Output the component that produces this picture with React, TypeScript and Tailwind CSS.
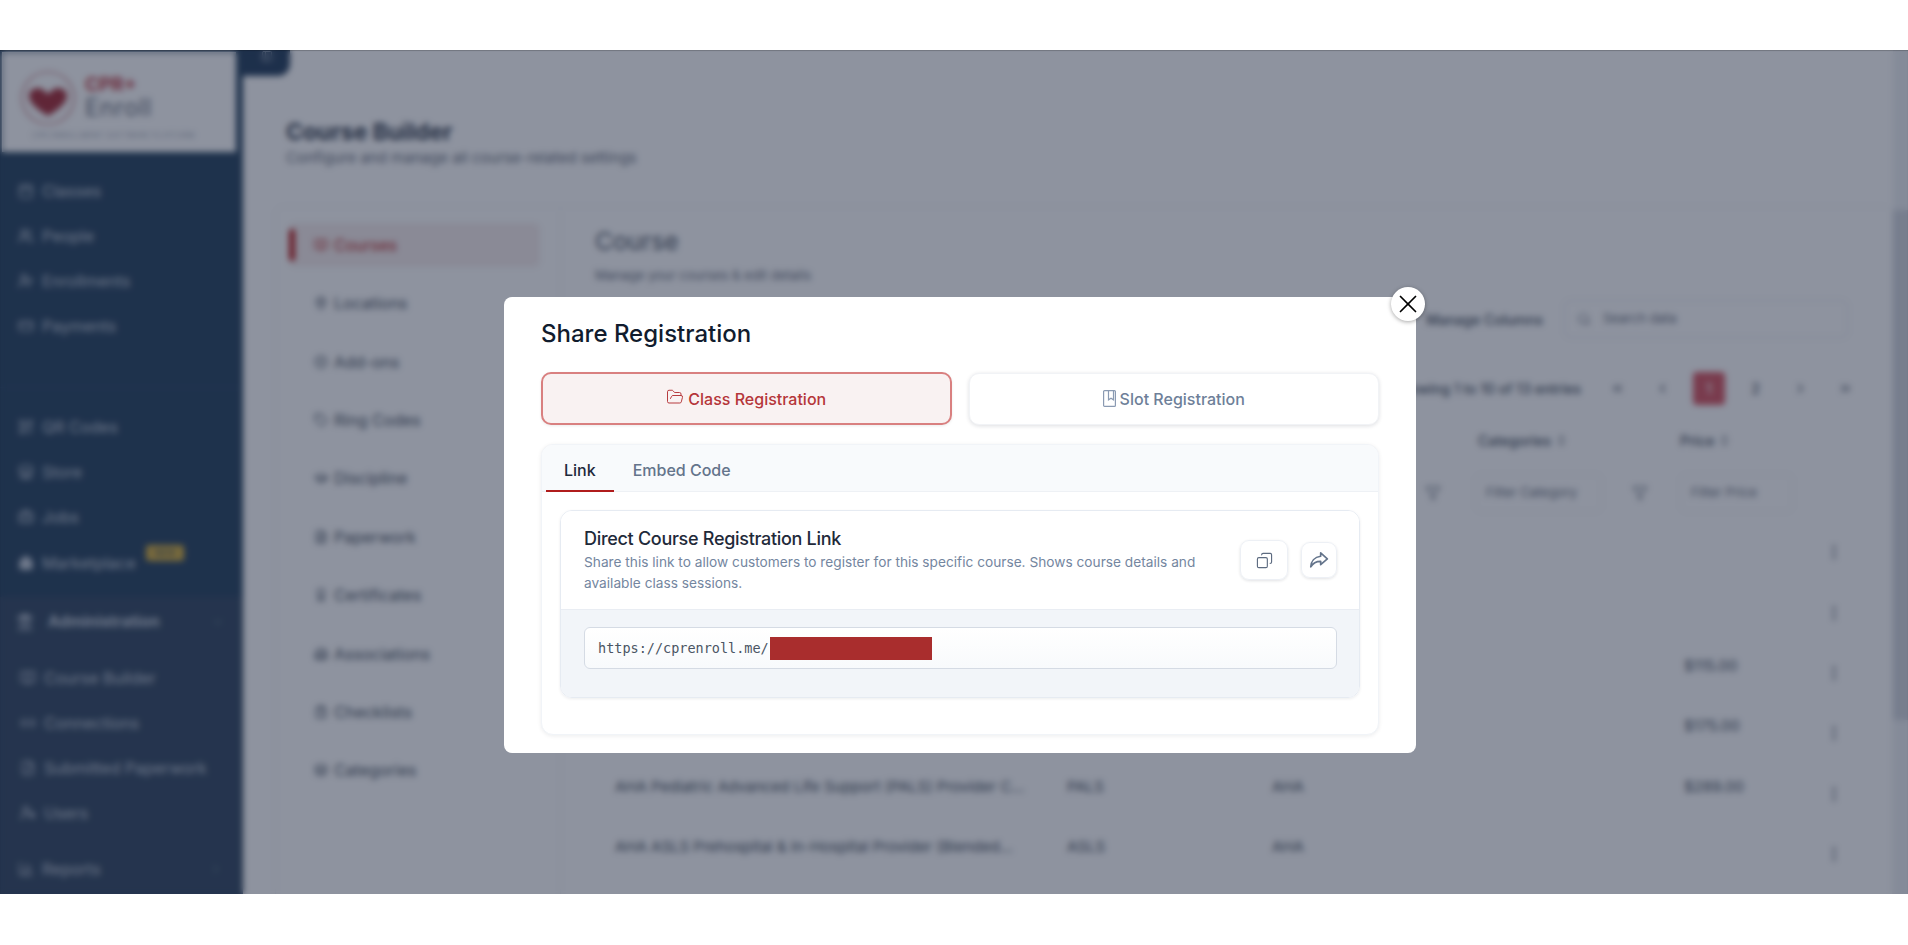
import { ChevronDown, ChevronLeft, ChevronRight, ChevronsLeft, ChevronsRight, ChevronsUpDown, Copy, EllipsisVertical, Filter, FolderOpen, Search, X, Calendar, Users, UserPlus, CreditCard, QrCode, Store, Briefcase, House, Landmark, BookOpen, Link2, FileCheck, UserCog, MapPin, PlusCircle, Tag, GraduationCap, FileText, Award, Building2, ClipboardList, Layers, BarChart3, PanelLeft } from "lucide-react";

const inter = { fontFamily: "Inter, sans-serif" };

const top = [
  { label: "Classes", icon: Calendar, cls: "h-[44px]" },
  { label: "People", icon: Users, cls: "h-[45px]" },
  { label: "Enrollments", icon: UserPlus, cls: "h-[45px]" },
  { label: "Payments", icon: CreditCard, cls: "h-[45px]" },
];
const mid = [
  { label: "QR Codes", icon: QrCode },
  { label: "Store", icon: Store },
  { label: "Jobs", icon: Briefcase },
];
const admin = [
  { label: "Course Builder", icon: BookOpen },
  { label: "Connections", icon: Link2 },
  { label: "Submitted Paperwork", icon: FileCheck },
  { label: "Users", icon: UserCog },
];
const builderNav = [
  { label: "Locations", icon: MapPin },
  { label: "Add-ons", icon: PlusCircle },
  { label: "Ring Codes", icon: Tag },
  { label: "Discipline", icon: GraduationCap },
  { label: "Paperwork", icon: FileText },
  { label: "Certificates", icon: Award },
  { label: "Associations", icon: Building2 },
  { label: "Checklists", icon: ClipboardList },
  { label: "Categories", icon: Layers },
];
const rows = [
  { name: "", code: "", org: "", price: "" },
  { name: "", code: "", org: "", price: "" },
  { name: "", code: "", org: "", price: "$115.00" },
  { name: "", code: "", org: "", price: "$175.00" },
  { name: "AHA Pediatric Advanced Life Support (PALS) Provider C...", code: "PALS", org: "AHA", price: "$289.00" },
  { name: "AHA ASLS Prehospital & In-Hospital Provider (Blended...", code: "ASLS", org: "AHA", price: "" },
];

function SlotIcon() {
  return (
    <svg width="13" height="17" viewBox="0 0 13 17" fill="none" stroke="#8a9ab2" strokeWidth="1.2" className="shrink-0 -mt-[2px]">
      <rect x="0.6" y="0.6" width="11.8" height="15.8" rx="1" />
      <path d="M5.5 0.6V9.8L8 8.2L10.5 9.8V0.6" />
    </svg>
  );
}

function ShareIcon() {
  return (
    <svg width="20" height="20" viewBox="0 0 18 18" fill="none" stroke="currentColor" strokeWidth="1.5" strokeLinejoin="round" strokeLinecap="round">
      <path d="M10.5 2.5L16.5 8L10.5 13.2V10.2C6.5 10.2 3.6 11.6 1.6 15.2C1.8 10.2 5 6.2 10.5 5.6V2.5Z" />
    </svg>
  );
}

function Logo() {
  return (
    <div className="relative flex items-center h-full pl-[18px] gap-[9px]">
      <svg width="56" height="56" viewBox="0 0 56 56" fill="none" className="shrink-0 -mt-[8px]">
        <circle cx="28" cy="28" r="26" stroke="#b3545c" strokeWidth="1.2" />
        <path d="M28 46C17 39 9 33 9 26C9 21 13 18 18 18C22 18 26 21 28 24C30 21 34 18 38 18C43 18 47 21 47 26C47 33 39 39 28 46Z" fill="#a8323c" />
        <path d="M20 11H36V17L28 24L20 17Z" fill="#ffffff" />
      </svg>
      <div className="flex flex-col gap-[1px] -mt-[8px]">
        <span className="text-[19px] leading-[19px] font-bold text-[#c04049]">CPR+</span>
        <span className="text-[24px] leading-[26px] text-[#6b7280] tracking-wide">Enroll</span>
      </div>
      <span className="absolute left-[30px] top-[80px] text-[7px] leading-[8px] tracking-[0.6px] text-[#9ca3af] whitespace-nowrap">CPR ENROLLMENT SOFTWARE PLATFORM</span>
    </div>
  );
}

function Sidebar() {
  return (
    <aside className="w-[243px] shrink-0 h-full bg-[#2d4863] flex flex-col text-[#c4cdd9] text-[16px]">
      <div className="h-[100px] mx-[2px] mt-[2px] w-[234px] bg-white shrink-0"><Logo /></div>
      <nav className="pt-[17px] flex flex-col">
        {top.map((i) => (
          <div key={i.label} className={`${i.cls} flex items-center gap-[8px] pl-[18px]`}>
            <i.icon size={16} />
            <span>{i.label}</span>
          </div>
        ))}
      </nav>
      <div className="h-[57px] border-b border-[#344f6d] mb-[12px]" />
      <nav className="pt-[4px] flex flex-col">
        {mid.map((i) => (
          <div key={i.label} className="h-[45px] flex items-center gap-[8px] pl-[18px]">
            <i.icon size={16} />
            <span>{i.label}</span>
          </div>
        ))}
        <div className="h-[48px] flex items-center gap-[8px] pl-[18px]">
          <House size={16} fill="currentColor" />
          <span>Marketplace</span>
          <span className="-mt-[20px] ml-[2px] h-[16px] w-[38px] rounded-[3px] bg-[#d9b344] text-[9px] leading-[16px] text-center text-[#2d4863]">NEW</span>
        </div>
      </nav>
      <div className="mt-[10px] flex-1 bg-[#394d66]">
        <div className="h-[50px] flex items-center pl-[16px] gap-[14px] text-[15.5px] font-bold">
          <Landmark size={18} fill="currentColor" />
          <span>Administration</span>
          <ChevronDown size={14} className="ml-auto mr-[18px] opacity-30" />
        </div>
        <div className="pt-[8px]">
          {admin.map((i) => (
            <div key={i.label} className="h-[45px] flex items-center gap-[8px] pl-[20px] whitespace-nowrap">
              <i.icon size={16} />
              <span>{i.label}</span>
            </div>
          ))}
        </div>
        <div className="mt-[9px] h-[50px] flex items-center gap-[8px] pl-[18px]">
          <BarChart3 size={16} />
          <span>Reports</span>
          <ChevronRight size={14} className="ml-auto mr-[20px] opacity-30" />
        </div>
      </div>
    </aside>
  );
}

function BuilderNav() {
  return (
    <div className="w-[285px] shrink-0 border-r border-[#eef0f3] pt-[16px] pl-[13px] pr-[20px] text-[16px] text-[#4b5563]">
      <div className="h-[44px] rounded-md bg-[#f7eeee] flex items-center text-[#b91c1c] relative mb-[14px]">
        <span className="absolute left-0 top-[6px] h-[32px] w-[6px] rounded-full bg-[#b91c1c]" />
        <BookOpen size={14} className="ml-[25px] mr-[6px]" />
        <span>Courses</span>
      </div>
      {builderNav.map((i) => (
        <div key={i.label} className="h-[58.4px] flex items-center gap-[6px] pl-[25px] pb-[14px]">
          <i.icon size={14} />
          <span>{i.label}</span>
        </div>
      ))}
    </div>
  );
}

function CoursePanel() {
  const pages = [ChevronsLeft, ChevronLeft];
  return (
    <div className="pl-[34px] pr-[10px] pt-[19px] text-[#4b5563]">
      <h2 className="text-[24.5px] leading-[30px] text-[#4b5563]">Course</h2>
      <p className="text-[13px] leading-[20px] mt-[9px] text-[#6b7280]">Manage your courses &amp; edit details</p>
      <div className="mt-[15px] h-[38px] flex items-center justify-end gap-[21px] text-[14px]">
        <span className="font-medium">Manage Columns</span>
        <div className="w-[284px] h-[38px] border border-[#e5e7eb] rounded-md flex items-center pl-[12px] gap-[12px] text-[#6b7280] text-[13px] mr-[34px]">
          <Search size={14} />
          <span>Search data</span>
        </div>
      </div>
      <div className="mt-[30px] h-[40px] flex items-center justify-end text-[14px] font-medium pr-[14px]">
        <span className="mr-[14px] whitespace-nowrap">Showing 1 to 10 of 13 entries</span>
        {pages.map((P, n) => (
          <span key={n} className="w-[45px] flex justify-center"><P size={15} /></span>
        ))}
        <span className="w-[32px] h-[33px] rounded-[4px] bg-[#d85a66] text-white flex items-center justify-center mx-[8px]">1</span>
        <span className="w-[45px] text-center">2</span>
        <span className="w-[45px] flex justify-center"><ChevronRight size={15} /></span>
        <span className="w-[45px] flex justify-center"><ChevronsRight size={15} /></span>
      </div>
    </div>
  );
}

function CourseTable() {
  return (
    <div className="pl-[54px] mt-[10px] text-[14px] text-[#4b5563]">
      <div className="grid grid-cols-[452px_205px_206px_202px_150px] h-[44px] items-center font-medium">
        <span>Course Name</span>
        <span>Code</span>
        <span>Association</span>
        <span className="flex items-center gap-[4px]">Categories <ChevronsUpDown size={13} /></span>
        <span className="flex items-center gap-[4px]">Price <ChevronsUpDown size={13} /></span>
      </div>
      <div className="mt-[7px] h-[44px] flex items-center pl-[810px] pt-[4px]">
        <Filter size={16} className="opacity-70 shrink-0" />
        <span className="ml-[34px] w-[127px] h-[38px] shrink-0 border border-[#eceef1] rounded-md flex items-center pl-[10px] text-[13px] text-[#6b7280] whitespace-nowrap">Filter Category</span>
        <Filter size={16} className="ml-[30px] opacity-70 shrink-0" />
        <span className="ml-[32px] w-[113px] h-[38px] shrink-0 border border-[#eceef1] rounded-md flex items-center pl-[10px] text-[13px] text-[#6b7280] whitespace-nowrap">Filter Price</span>
      </div>
      <div className="pt-[2px] text-[15px]">
        {rows.map((r, i) => (
          <div key={i} className="grid grid-cols-[452px_205px_412px_141px_40px] h-[60.4px] items-center">
            <span className="whitespace-nowrap overflow-hidden">{r.name}</span>
            <span>{r.code}</span>
            <span>{r.org}</span>
            <span>{r.price}</span>
            <EllipsisVertical size={18} className="mt-[14px]" />
          </div>
        ))}
      </div>
    </div>
  );
}

function Page() {
  return (
    <div className="absolute inset-0 flex bg-white" style={inter}>
      <Sidebar />
      <div className="w-[47px] h-[26px] bg-[#2b4461] rounded-br-[12px] flex justify-center shrink-0">
        <PanelLeft size={12} className="text-[#c4cdd9]" />
      </div>
      <div className="flex-1 min-w-0 -ml-[4px] flex">
        <div className="flex-1 min-w-0 pt-[70px]">
          <h1 className="text-[23px] leading-[24px] font-bold text-[#374151]">Course Builder</h1>
          <p className="text-[15px] leading-[20px] mt-[4px] text-[#6b7280]">Configure and manage all course-related settings</p>
          <div className="-ml-[11px] mt-[38px] flex border border-[#f1f2f4] rounded-lg h-[700px]">
            <BuilderNav />
            <div className="flex-1 min-w-0">
              <CoursePanel />
              <CourseTable />
            </div>
          </div>
        </div>
        <div className="w-[15px] shrink-0 bg-[#eef0f3] relative">
          <span className="absolute left-0 right-0 top-[160px] h-[510px] bg-[#d3d7de]" />
        </div>
      </div>
    </div>
  );
}

function Modal() {
  return (
    <div className="relative ml-[12px] w-[912px] h-[456px] bg-white rounded-lg text-[#0f172a]" style={inter}>
      <button className="absolute -top-[10px] -right-[9px] w-[34px] h-[34px] rounded-full bg-white shadow-[0_1px_4px_rgba(0,0,0,0.35)] flex items-center justify-center text-black">
        <X size={30} strokeWidth={1.35} />
      </button>
      <div className="px-[37px] pt-[22px]">
        <h2 className="text-[24px] leading-[30px] font-medium text-[#111c2e]">Share Registration</h2>
        <div className="mt-[23px] grid grid-cols-2 gap-[17px] h-[53px]">
          <button className="flex items-center justify-center gap-[4px] rounded-[10px] border-[2px] border-[#d98080] bg-[#f9f2f2] text-[#b5363a] text-[16px] font-medium shadow-[0_1px_3px_rgba(0,0,0,0.08)]">
            <FolderOpen size={18} strokeWidth={1.3} className="-mt-[3px]" />
            Class Registration
          </button>
          <button className="mt-[1px] flex items-center justify-center gap-[4px] rounded-[10px] border border-[#f1f3f6] bg-white text-[#6e7f99] text-[16px] font-medium shadow-[0_1px_4px_rgba(15,23,42,0.14)]">
            <SlotIcon />
            Slot Registration
          </button>
        </div>
        <div className="mt-[19px] h-[291px] rounded-xl bg-white border border-[#f1f4f8] shadow-[0_1px_4px_rgba(15,23,42,0.08)] overflow-hidden">
          <div className="h-[47px] bg-[#f8fafc] border-b border-[#eef1f5] flex pl-[4px] text-[16px] font-medium">
            <span className="relative px-[18px] h-[47px] pt-[3px] flex items-center text-[#1e293b]">
              Link
              <span className="absolute left-0 right-0 bottom-0 h-[2px] bg-[#b01c1c]" />
            </span>
            <span className="px-[19px] pt-[3px] flex items-center text-[#64748b]">Embed Code</span>
          </div>
          <div className="mt-[18px] mx-[18px] rounded-xl border border-[#e6ebf2] shadow-[0_1px_3px_rgba(15,23,42,0.08)] overflow-hidden">
            <div className="h-[98px] flex justify-between items-start pl-[23px] pr-[22px] bg-white">
              <div className="pt-[16px] w-[640px]">
                <h3 className="text-[18px] leading-[24px] font-medium text-[#1f2a3a] tracking-[-0.3px]">Direct Course Registration Link</h3>
                <p className="mt-[1px] text-[13.7px] leading-[21px] text-[#7486a0]">Share this link to allow customers to register for this specific course. Shows course details and available class sessions.</p>
              </div>
              <div className="flex items-center gap-[13px] pt-[29px]">
                <button className="w-[48px] h-[40px] rounded-[9px] border border-[#edf0f5] shadow-[0_1px_3px_rgba(15,23,42,0.12)] flex items-center justify-center text-[#5d6b80]">
                  <Copy size={17} strokeWidth={1.6} className="-scale-x-100" />
                </button>
                <button className="w-[36px] h-[36px] rounded-[9px] border border-[#edf0f5] shadow-[0_1px_3px_rgba(15,23,42,0.12)] flex items-center justify-center text-[#64748b]">
                  <ShareIcon />
                </button>
              </div>
            </div>
            <div className="h-[88px] bg-[#f2f5f9] border-t border-[#e9edf3] pt-[17px] pl-[23px] pr-[22px]">
              <div className="h-[42px] rounded-md border border-[#d5dbe4] bg-gradient-to-b from-white to-[#f8fafc] flex items-center pl-[13px] text-[13.5px] text-[#4a5563]" style={{ fontFamily: "'DejaVu Sans Mono', monospace" }}>
                <span>https://cprenroll.me/</span>
                <span className="ml-[1px] h-[23px] w-[162px] bg-[#a92d2d]" />
              </div>
            </div>
          </div>
        </div>
      </div>
    </div>
  );
}

export default function App() {
  return (
    <div className="h-[945px] w-full bg-white flex flex-col overflow-hidden">
      <div className="h-[50px] shrink-0" />
      <main className="relative h-[844px] shrink-0 overflow-hidden">
        <Page />
        <div className="absolute inset-0 bg-[#0f1a33]/[0.47] backdrop-blur-[3px] flex justify-center items-start pt-[247px] shadow-[inset_0_1px_1px_rgba(0,0,0,0.2)]">
          <Modal />
        </div>
      </main>
    </div>
  );
}
